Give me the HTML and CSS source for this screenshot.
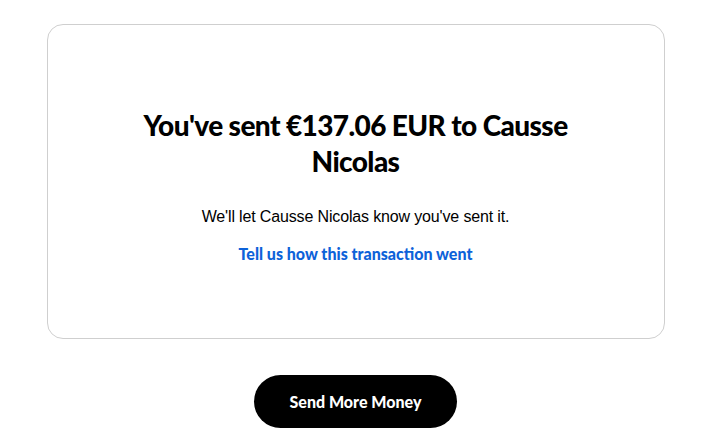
FILE: index.html
```html
<!DOCTYPE html>
<html lang="en">
<head>
  <meta charset="UTF-8">
  <meta name="viewport" content="width=device-width, initial-scale=1.0">
  <title>Payment sent</title>
  <link rel="stylesheet" href="styles.css">
</head>
<body>
  <main class="page">
    <section class="done-card">
      <h1 class="done-title">You've sent €137.06 EUR to Causse Nicolas</h1>
      <p class="done-note">We'll let Causse Nicolas know you've sent it.</p>
      <a class="done-link" href="#">Tell us how this transaction went</a>
    </section>

    <div class="actions">
      <button class="btn-primary">Send More Money</button>
    </div>
  </main>
</body>
</html>
```

FILE: styles.css
```css
* {
  box-sizing: border-box;
  margin: 0;
  padding: 0;
}

body {
  font-family: 'Liberation Sans', Arial, sans-serif;
  background: #ffffff;
  color: #000000;
}

.page {
  width: 618px;
  margin: 24px auto 0;
}

.done-card {
  border: 1px solid #cfcfcf;
  border-radius: 16px;
  padding: 82px 40px 73px;
  display: flex;
  flex-direction: column;
  align-items: center;
  text-align: center;
}

.done-title {
  font-family: Lato, sans-serif;
  font-weight: 900;
  font-size: 28px;
  line-height: 36px;
  letter-spacing: -0.6px;
  max-width: 440px;
}

.done-note {
  margin-top: 27px;
  font-size: 16px;
  line-height: 22px;
  letter-spacing: -0.15px;
}

.done-link {
  margin-top: 15px;
  font-family: Lato, sans-serif;
  font-weight: 900;
  font-size: 16px;
  line-height: 22px;
  color: #0d62d9;
  text-decoration: none;
}

.actions {
  display: flex;
  justify-content: center;
  margin-top: 36px;
}

.btn-primary {
  width: 203px;
  height: 53px;
  border: none;
  border-radius: 27px;
  background: #000000;
  color: #ffffff;
  font-family: Lato, sans-serif;
  font-weight: 900;
  font-size: 16px;
  cursor: pointer;
}
```
